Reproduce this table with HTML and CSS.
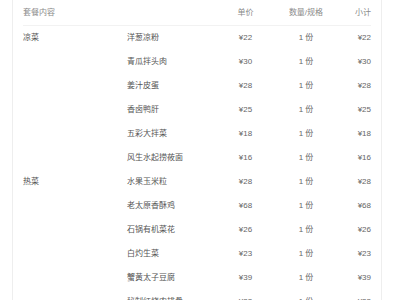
FILE: index.html
```html
<!DOCTYPE html>
<html lang="zh-CN">
<head>
<meta charset="utf-8">
<link rel="stylesheet" href="styles.css">
</head>
<body>
<div class="card">
  <div class="row head">
    <div class="c-cat">套餐内容</div>
    <div class="c-name"></div>
    <div class="c-price">单价</div>
    <div class="c-qty">数量/规格</div>
    <div class="c-sub">小计</div>
  </div>
  <div class="row"><div class="c-cat">凉菜</div><div class="c-name">洋葱凉粉</div><div class="c-price">¥22</div><div class="c-qty">1 份</div><div class="c-sub">¥22</div></div>
  <div class="row"><div class="c-cat"></div><div class="c-name">青瓜拌头肉</div><div class="c-price">¥30</div><div class="c-qty">1 份</div><div class="c-sub">¥30</div></div>
  <div class="row"><div class="c-cat"></div><div class="c-name">姜汁皮蛋</div><div class="c-price">¥28</div><div class="c-qty">1 份</div><div class="c-sub">¥28</div></div>
  <div class="row"><div class="c-cat"></div><div class="c-name">香卤鸭肝</div><div class="c-price">¥25</div><div class="c-qty">1 份</div><div class="c-sub">¥25</div></div>
  <div class="row"><div class="c-cat"></div><div class="c-name">五彩大拌菜</div><div class="c-price">¥18</div><div class="c-qty">1 份</div><div class="c-sub">¥18</div></div>
  <div class="row"><div class="c-cat"></div><div class="c-name">风生水起捞莜面</div><div class="c-price">¥16</div><div class="c-qty">1 份</div><div class="c-sub">¥16</div></div>
  <div class="row"><div class="c-cat">热菜</div><div class="c-name">水果玉米粒</div><div class="c-price">¥28</div><div class="c-qty">1 份</div><div class="c-sub">¥28</div></div>
  <div class="row"><div class="c-cat"></div><div class="c-name">老太原香酥鸡</div><div class="c-price">¥68</div><div class="c-qty">1 份</div><div class="c-sub">¥68</div></div>
  <div class="row"><div class="c-cat"></div><div class="c-name">石锅有机菜花</div><div class="c-price">¥26</div><div class="c-qty">1 份</div><div class="c-sub">¥26</div></div>
  <div class="row"><div class="c-cat"></div><div class="c-name">白灼生菜</div><div class="c-price">¥23</div><div class="c-qty">1 份</div><div class="c-sub">¥23</div></div>
  <div class="row"><div class="c-cat"></div><div class="c-name">蟹黄太子豆腐</div><div class="c-price">¥39</div><div class="c-qty">1 份</div><div class="c-sub">¥39</div></div>
  <div class="row"><div class="c-cat"></div><div class="c-name">秘制红烧肉排骨</div><div class="c-price">¥32</div><div class="c-qty">1 份</div><div class="c-sub">¥32</div></div>
</div>
</body>
</html>
```
FILE: styles.css
```css
html, body {
  margin: 0;
  padding: 0;
  background: #ffffff;
}
body {
  font-family: "Liberation Sans", "Noto Sans CJK SC", sans-serif;
  font-size: 8px;
  color: #555555;
}
.card {
  margin-left: 12px;
  width: 370px;
  box-sizing: border-box;
  padding: 1px 10px 0;
  border-left: 1px solid #eeeeee;
  border-right: 1px solid #eeeeee;
  background: #ffffff;
}
.row {
  display: grid;
  grid-template-columns: 104px 95px 47px 74px 28px;
  height: 24px;
  align-items: center;
  line-height: 12px;
}
.head {
  color: #8a8a8a;
  border-bottom: 1px solid #f2f2f2;
}
.c-cat, .c-name {
  text-align: left;
}
.c-price, .c-qty {
  text-align: center;
  color: #666666;
}
.c-sub {
  text-align: right;
  color: #666666;
}
.head .c-price, .head .c-qty, .head .c-sub {
  color: #8a8a8a;
}
```
